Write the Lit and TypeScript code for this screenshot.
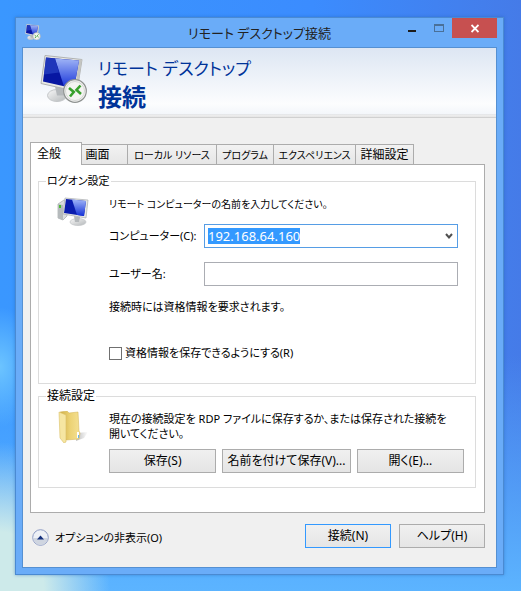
import { LitElement, html, css, svg } from "lit";
import { customElement, state, query } from "lit/decorators.js";
import { classMap } from "lit/directives/class-map.js";

const TABS = [
  { name: "全般", kana: false },
  { name: "画面", kana: false },
  { name: "ローカル リソース", kana: true },
  { name: "プログラム", kana: true },
  { name: "エクスペリエンス", kana: true },
  { name: "詳細設定", kana: false },
];

const monitorPaints = svg`
  <defs>
    <linearGradient id="shine" x1="0" y1="0" x2="0" y2="1">
      <stop offset="0" stop-color="#9fb4f6"/><stop offset="1" stop-color="#1330d8"/>
    </linearGradient>
    <linearGradient id="base" x1="0" y1="0" x2="1" y2="1">
      <stop offset="0" stop-color="#f8f8f8"/><stop offset="1" stop-color="#b4b8ba"/>
    </linearGradient>
  </defs>`;

const remoteIcon = (cls: string) => html`
  <svg class=${cls} viewBox="0 0 48 48" aria-hidden="true">
    ${monitorPaints}
    ${svg`
    <ellipse cx="17" cy="41" rx="9.500" ry="6" fill="url(#base)" stroke="#c4c7c9"/>
    <path d="M15 32 L26 34 L25 41 L17 41 Z" fill="#b4b8bb"/>
    <path d="M5 1 L42 5 L37 37 L1 29 Z" fill="#e8e8e4" stroke="#b0b2b2" stroke-width="1"/>
    <path d="M39 5 L42 5 L37 37 L35 34 Z" fill="#c4c5c1"/>
    <path d="M6 3 L39 6 L34 34 L3 27 Z" fill="#0716a2"/>
    <path d="M15 4 L39 6 L34 34 L24 32 Z" fill="url(#shine)"/>
    <path d="M6 3 L15 4 L19 18 L4 20 Z" fill="#2a45c4" opacity=".7"/>
    <circle cx="35" cy="36.500" r="11.300" fill="#f4f4f2" stroke="#8f9391" stroke-width="1.200"/>
    <circle cx="35" cy="36.500" r="9.500" fill="none" stroke="#d5d7d5" stroke-width="1"/>
    <path d="M29 33.500 L33.800 37.500 L30 42" fill="none" stroke="#38a02c" stroke-width="2.600"/>
    <path d="M40.500 31 L36.500 35.500 L41 39.500" fill="none" stroke="#38a02c" stroke-width="2.600"/>`}
  </svg>`;

const computerIcon = html`
  <svg class="icon" viewBox="0 0 32 32" aria-hidden="true">
    ${monitorPaints}
    ${svg`
    <path d="M1 8 L7 4 L10 5 L10 20 L6 24 L1 22 Z" fill="#dcdedf" stroke="#a5a9ab" stroke-width=".7"/>
    <path d="M1 8 L6 9 L6 24 L1 22 Z" fill="#b5babc"/>
    <rect x="2" y="9" width="2" height="3" fill="#4dbb35"/>
    <ellipse cx="21" cy="26" rx="8" ry="3.500" fill="url(#base)" stroke="#c0c3c5" stroke-width=".7"/>
    <path d="M17 20 L23 21 L22 26 L18 26 Z" fill="#b4b8bb"/>
    <path d="M8 2 L31 4 L29 22 L6 18 Z" fill="#e6e7e5" stroke="#abaeb0" stroke-width=".7"/>
    <path d="M9 3 L29 5 L27 20 L7 17 Z" fill="#0a1cae"/>
    <path d="M15 3.600 L29 5 L27 20 L20 19 Z" fill="url(#shine)"/>`}
  </svg>`;

const folderIcon = html`
  <svg class="icon" viewBox="0 0 32 32" aria-hidden="true">
    <defs>
      <linearGradient id="fold" x1="0" y1="0" x2="1" y2="0">
        <stop offset="0" stop-color="#cfae45"/><stop offset=".5" stop-color="#ecd274"/><stop offset="1" stop-color="#f5e194"/>
      </linearGradient>
      <linearGradient id="shade" x1="0" y1="0" x2="1" y2="0">
        <stop offset="0" stop-color="#a0a0a0"/><stop offset="1" stop-color="#fff"/>
      </linearGradient>
    </defs>
    ${svg`
    <path d="M20 22 L31 21 L27 27 L19 30 Z" fill="url(#shade)" opacity=".7"/>
    <path d="M3 1 L10 0 L12 2 L21 1 L22 20 L23 22 L22 28 L9 29 Z" fill="url(#fold)" stroke="#d0b04e" stroke-width=".5"/>
    <path d="M2 1 L9 4 L9 31 L7 32 L3 27 Z" fill="#f6e6a2" stroke="#dcc168" stroke-width=".6"/>
    <path d="M21 21 v6" stroke="#fff" stroke-width="2"/>
    <path d="M21.500 24 v3" stroke="#6cb4e4" stroke-width="1"/>`}
  </svg>`;

@customElement("app-root")
export class AppRoot extends LitElement {
  @state() private tab = 0;
  @query("#computer") private computer!: HTMLInputElement;

  static styles = css`
    :host {
      display: block;
      box-sizing: border-box;
      min-height: 100vh;
      padding: 17px 17px 17px 15px;
      font: 11px/16px "Noto Sans", "Noto Sans CJK JP", sans-serif;
      font-feature-settings: "palt";
      color: #000;
      background:
        radial-gradient(ellipse 110px 150px at 0 100%, #cdeaea 40%, #a9dcf400),
        radial-gradient(ellipse 40px 60px at 0 62%, #6cc4ff, #6cc4ff00),
        linear-gradient(#3a97ff00 60%, #5cb4ff),
        linear-gradient(to right, #3a97ff, #3b8cfe 60%, #457be8);
    }
    * { box-sizing: border-box; }
    button, input {
      font: inherit;
      font-feature-settings: inherit;
      color: inherit;
      margin: 0;
    }
    .window {
      border: 1px solid #4a8ad2;
      padding: 0 6px 6px;
      background: #6aacf8;
      box-shadow: 0 0 3px #2060b080;
    }
    .titlebar {
      display: grid;
      grid-template-columns: 100px 1fr 100px;
      height: 29px;
    }
    .small { width: 16px; height: 16px; margin: 6px 3px; }
    .caption {
      margin: 0;
      font-size: 13px;
      line-height: 30px;
      font-weight: 400;
      text-align: center;
      white-space: nowrap;
      color: #222;
    }
    .controls { display: flex; justify-content: flex-end; align-items: flex-start; }
    .ctl {
      width: 27px;
      height: 20px;
      padding: 0;
      border: 0;
      background: none;
    }
    .ctl svg { display: block; margin: auto; }
    .close { width: 45px; background: #c75050; }
    .client { border: 1px solid #5590d2; background: #f0f0f0; }
    .banner {
      display: flex;
      gap: 10px;
      height: 70px;
      padding: 6px 17px;
      color: #003399;
      background: linear-gradient(#dde6f3, #fcfdfe 80%, #f3f6fa 66px, #d9d9d9 67px, #fff 68px, #d0d0d0 69px);
    }
    .big { width: 48px; height: 49px; }
    .banner h2 { margin: 0; font-size: 17px; line-height: 30px; font-weight: 400; }
    .banner strong { display: block; font-size: 24px; line-height: 26px; }
    .body { padding: 24px 11px 19px 7px; }
    .tabs { display: flex; align-items: flex-end; }
    .tab {
      height: 20px;
      padding: 0;
      border: 1px solid #acacac;
      border-width: 1px 1px 0 0;
      background: linear-gradient(#f2f2f2, #e6e6e6);
      font-size: 12px;
      white-space: nowrap;
    }
    .tab.on {
      height: 23px;
      margin-bottom: -1px;
      border-left-width: 1px;
      background: #fff;
      position: relative;
    }
    .tab.kana, .lead { font-size: 10px; }
    .t0 { width: 52px; padding-right: 14px; }
    .t1 { width: 46px; padding-right: 14px; }
    .t2 { width: 89px; }
    .t3 { width: 57px; }
    .t4 { width: 82px; }
    .t5 { width: 58px; }
    .panel { border: 1px solid #acacac; padding: 8px 8px 24px 7px; background: #fff; }
    fieldset {
      min-width: 0;
      margin: 0 0 4px;
      padding: 7px 11px 14px 18px;
      border: 1px solid #dcdcdc;
    }
    fieldset:last-child { margin: 0; }
    legend { margin-left: -11px; padding: 0 1px; }
    .kanji { font-size: 12px; }
    .group { display: grid; grid-template-columns: 32px 1fr; gap: 20px; }
    .icon { width: 32px; height: 32px; }
    .fields { display: grid; padding: 0 6px 8px 0; }
    .row {
      display: grid;
      grid-template-columns: 95px 1fr;
      align-items: center;
      margin-bottom: 14px;
      white-space: nowrap;
    }
    .row + .row { margin-bottom: 13px; }
    p { margin: 0; }
    .lead { margin-bottom: 12px; }
    .note { margin-bottom: 30px; }
    .box {
      display: flex;
      align-items: center;
      height: 24px;
      border: 1px solid #abadb3;
      background: #fff;
    }
    .combo { border-color: #569de5; }
    .text {
      flex: 1;
      min-width: 0;
      padding: 0 3px;
      border: 0;
      outline: 0;
      background: none;
      font-size: 13px;
    }
    .text::selection { color: #fff; background: #3399ff; }
    .arrow { width: 17px; height: 22px; padding: 0; border: 0; background: none; }
    .arrow svg { display: block; margin: auto; }
    .check { display: flex; align-items: center; gap: 3px; }
    .check input {
      appearance: none;
      width: 13px;
      height: 13px;
      border: 1px solid #707070;
      background: #fff;
    }
    .check input:checked { background: #3399ff; }
    .info { line-height: 15px; margin-bottom: 8px; }
    .actions { display: grid; grid-template-columns: 5fr 6fr 5fr; gap: 6px; }
    .btn {
      height: 24px;
      padding: 0;
      border: 1px solid #acacac;
      background: linear-gradient(#f0f0f0, #e5e5e5);
      font-size: 12px;
      white-space: nowrap;
    }
    .default { border-color: #3399ff; }
    .footer { display: flex; align-items: center; gap: 8px; padding-top: 11px; }
    .footer .btn { width: 86px; }
    .toggle {
      display: flex;
      align-items: center;
      gap: 6px;
      margin-right: auto;
      padding: 3px 2px 0;
      border: 0;
      background: none;
    }
    .toggle svg { width: 17px; height: 17px; }
  `;

  firstUpdated() {
    this.computer.focus();
    this.computer.select();
  }

  render() {
    return html`
      <main class="window">
        <header class="titlebar">
          ${remoteIcon("small")}
          <h1 class="caption">リモート デスクトップ接続</h1>
          <div class="controls">
            <button class="ctl" aria-label="最小化">
              <svg width="10" height="20"><path d="M1 12h8v2H1z" fill="#1c1c1c"/></svg>
            </button>
            <button class="ctl" aria-label="最大化">
              <svg width="10" height="20"><path d="M0 6h10v8H0zM1 8v5h8V8z" fill="#4a7098" fill-rule="evenodd"/></svg>
            </button>
            <button class="ctl close" aria-label="閉じる">
              <svg width="8" height="20"><path d="M.5 7 7.500 14M7.500 7 .5 14" stroke="#fff" stroke-width="1.800"/></svg>
            </button>
          </div>
        </header>
        <div class="client">
          <div class="banner">
            ${remoteIcon("big")}
            <h2>リモート デスクトップ<strong>接続</strong></h2>
          </div>
          <div class="body">
            <div class="tabs" role="tablist">
              ${TABS.map(({ name, kana }, i) => html`
                <button role="tab" aria-selected=${i === this.tab}
                  class=${classMap({ tab: true, kana, on: i === this.tab, [`t${i}`]: true })}
                  @click=${() => (this.tab = i)}>${name}</button>`)}
            </div>
            <div class="panel" role="tabpanel">
              <fieldset>
                <legend>ログオン設定</legend>
                <div class="group">
                  ${computerIcon}
                  <div class="fields">
                    <p class="lead">リモート コンピューターの名前を入力してください。</p>
                    <div class="row">
                      <label for="computer">コンピューター(C):</label>
                      <div class="box combo">
                        <input id="computer" class="text" value="192.168.64.160">
                        <button class="arrow" aria-label="一覧を開く">
                          <svg width="8" height="7"><path d="M1 1 4 4.500 7 1" fill="none" stroke="#505050" stroke-width="2"/></svg>
                        </button>
                      </div>
                    </div>
                    <div class="row">
                      <label for="user">ユーザー名:</label>
                      <div class="box"><input id="user" class="text"></div>
                    </div>
                    <p class="note">接続時には資格情報を要求されます。</p>
                    <label class="check"><input type="checkbox">資格情報を保存できるようにする(R)</label>
                  </div>
                </div>
              </fieldset>
              <fieldset>
                <legend class="kanji">接続設定</legend>
                <div class="group">
                  ${folderIcon}
                  <div>
                    <p class="info">現在の接続設定を RDP ファイルに保存するか、または保存された接続を<br>開いてください。</p>
                    <div class="actions">
                      <button class="btn">保存(S)</button>
                      <button class="btn">名前を付けて保存(V)...</button>
                      <button class="btn">開く(E)...</button>
                    </div>
                  </div>
                </div>
              </fieldset>
            </div>
            <footer class="footer">
              <button class="toggle" aria-expanded="true">
                <svg viewBox="0 0 17 17">
                  <circle cx="8.500" cy="8.500" r="7.800" fill="#edf0f6" stroke="#8e9cc4"/>
                  <path d="M1.500 9h14a7 7 0 0 1-14 0" fill="#cfd5e0"/>
                  <path d="M5 10.500 8.500 6.500 12 10.500z" fill="#14307c"/>
                </svg>
                オプションの非表示(O)
              </button>
              <button class="btn default">接続(N)</button>
              <button class="btn">ヘルプ(H)</button>
            </footer>
          </div>
        </div>
      </main>`;
  }
}
